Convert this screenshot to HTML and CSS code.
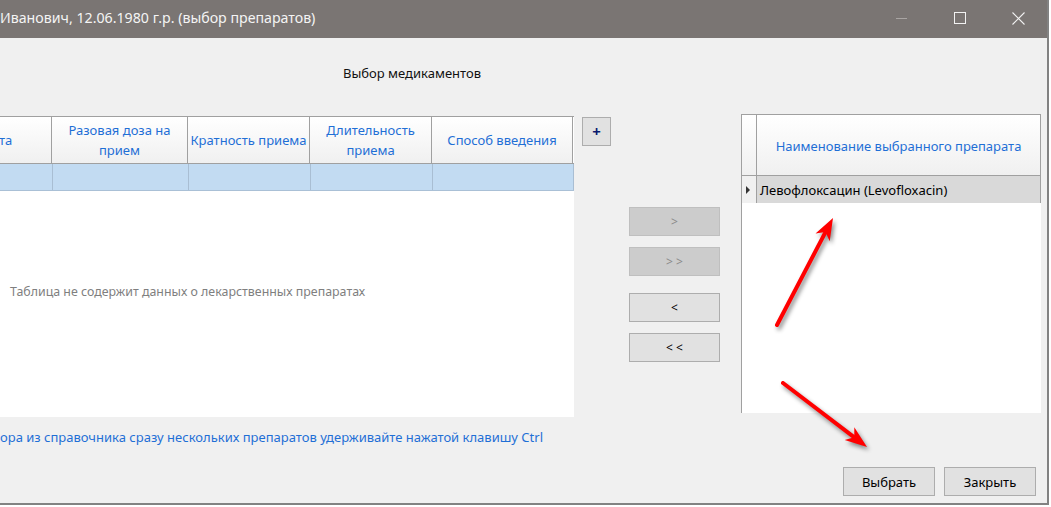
FILE: index.html
```html
<!DOCTYPE html>
<html lang="ru">
<head>
<meta charset="utf-8">
<link rel="stylesheet" href="styles.css">
</head>
<body>
<div class="window">
  <div class="titlebar">
    <span class="title">Иванович, 12.06.1980 г.р. (выбор препаратов)</span>
    <div class="controls">
      <span class="ctl"><svg width="12" height="12" viewBox="0 0 12 12"><line x1="0" y1="6.5" x2="11" y2="6.5" stroke="#a9a5a3" stroke-width="1"/></svg></span>
      <span class="ctl"><svg width="12" height="12" viewBox="0 0 12 12"><rect x="0.5" y="0.5" width="11" height="11" fill="none" stroke="#f2f2f2" stroke-width="1"/></svg></span>
      <span class="ctl"><svg width="13" height="13" viewBox="0 0 13 13"><path d="M0.5 0.5L12.5 12.5M12.5 0.5L0.5 12.5" stroke="#f2f2f2" stroke-width="1.1"/></svg></span>
    </div>
  </div>
  <div class="content">
    <div class="heading">Выбор медикаментов</div>
    <div class="main">
      <div class="left-table">
        <div class="thead">
          <div class="th c1 first">та</div>
          <div class="th c2">Разовая доза на прием</div>
          <div class="th c3">Кратность приема</div>
          <div class="th c4">Длительность приема</div>
          <div class="th c5">Способ введения</div>
        </div>
        <div class="trow">
          <div class="td c1"></div>
          <div class="td c2"></div>
          <div class="td c3"></div>
          <div class="td c4"></div>
          <div class="td c5"></div>
        </div>
        <div class="tempty">Таблица не содержит данных о лекарственных препаратах</div>
      </div>
      <div class="plus-col"><button class="btn plus">+</button></div>
      <div class="nav-col">
        <button class="btn nav disabled">&gt;</button>
        <button class="btn nav disabled">&gt; &gt;</button>
        <button class="btn nav gap">&lt;</button>
        <button class="btn nav">&lt; &lt;</button>
      </div>
      <div class="right-table">
        <div class="rhead">
          <div class="rh-corner"></div>
          <div class="rh-title">Наименование выбранного препарата</div>
        </div>
        <div class="rrow">
          <div class="rr-head"><span class="tri"></span></div>
          <div class="rr-cell">Левофлоксацин (Levofloxacin)</div>
        </div>
        <div class="rbody"></div>
      </div>
    </div>
    <div class="hint">ора из справочника сразу нескольких препаратов удерживайте нажатой клавишу Ctrl</div>
    <div class="footer">
      <button class="btn foot">Выбрать</button>
      <button class="btn foot">Закрыть</button>
    </div>
  </div>
  <svg class="arrows" width="1051" height="507" viewBox="0 0 1051 507">
    <g class="arrow">
      <line x1="777" y1="325" x2="825.5" y2="232.1" stroke="#ff0000" stroke-width="4" stroke-linecap="round"/>
      <polygon points="833,218 829.7,241.2 825.5,232.1 815.5,233.6" fill="#ff0000"/>
    </g>
    <g class="arrow">
      <line x1="783" y1="383" x2="854.3" y2="437.3" stroke="#ff0000" stroke-width="4" stroke-linecap="round"/>
      <polygon points="867,447 844.7,440.1 854.3,437.3 854.3,427.3" fill="#ff0000"/>
    </g>
  </svg>
</div>
</body>
</html>
```

FILE: styles.css
```css
html, body {
  margin: 0;
  padding: 0;
  background: #ffffff;
}

body {
  font-family: "Noto Sans", "Open Sans", "DejaVu Sans", sans-serif;
  font-size: 13px;
  color: #000000;
}

.window {
  position: relative;
  width: 1047px;
  height: 503px;
  background: #f0f0f0;
  border-right: 2px solid #828282;
  border-bottom: 2px solid #828282;
  overflow: hidden;
}

.titlebar {
  height: 38px;
  background: #7a7573;
  display: flex;
  align-items: center;
  justify-content: space-between;
}

.title {
  color: #f4f4f4;
  font-size: 14.2px;
  padding-left: 0;
  margin-top: -4px;
  white-space: nowrap;
}

.controls {
  display: flex;
  height: 38px;
  align-items: center;
  margin-top: -2px;
}

.ctl {
  width: 58px;
  height: 38px;
  display: flex;
  align-items: center;
  justify-content: center;
}

.ctl svg {
  display: block;
}

.content {
  display: flex;
  flex-direction: column;
}

.heading {
  margin-top: 26px;
  height: 18px;
  line-height: 18px;
  padding-left: 343px;
  white-space: nowrap;
  color: #111111;
}

.main {
  margin-top: 32px;
  display: flex;
  align-items: flex-start;
}

/* left table */
.left-table {
  margin-top: 2px;
  width: 574px;
  height: 301px;
  background: #ffffff;
  display: flex;
  flex-direction: column;
}

.thead {
  display: flex;
  height: 48px;
  box-sizing: border-box;
  border-top: 1px solid #a0a0a0;
  border-bottom: 1px solid #a0a0a0;
}

.th {
  box-sizing: border-box;
  border-right: 1px solid #a0a0a0;
  background: linear-gradient(#ffffff, #f0f0f0);
  color: #1f6fd6;
  display: flex;
  align-items: center;
  justify-content: center;
  text-align: center;
  line-height: 20px;
  padding: 0 8px;
}

.th.first {
  justify-content: flex-start;
  padding: 0;
  margin-left: -1px;
}

.c1 { width: 53px; }
.c2 { width: 136px; }
.c3 { width: 122px; padding: 0 1px; white-space: nowrap; }
.c4 { width: 122px; }
.c5 { width: 141px; }

.trow {
  display: flex;
  height: 27px;
  box-sizing: border-box;
  background: #c2dbf2;
  border-bottom: 1px solid #aac0d6;
}

.td {
  box-sizing: border-box;
  border-right: 1px solid #a9bed3;
}

.tempty {
  color: #7f7f7f;
  font-size: 12.4px;
  padding-left: 10px;
  margin-top: 92px;
  white-space: nowrap;
}

/* buttons */
.btn {
  font-family: inherit;
  font-size: 13px;
  box-sizing: border-box;
  background: #e1e1e1;
  border: 1px solid #adadad;
  color: #000000;
  padding: 0;
  margin: 0;
  display: flex;
  align-items: center;
  justify-content: center;
}

.plus-col {
  margin-left: 8px;
  margin-top: 3px;
}

.plus {
  width: 29px;
  height: 29px;
  font-weight: bold;
  font-size: 15px;
  color: #0a1a6e;
  line-height: 1;
}

.nav-col {
  margin-left: 18px;
  margin-top: 93px;
  display: flex;
  flex-direction: column;
  gap: 11px;
}

.nav {
  width: 91px;
  height: 29px;
  font-size: 12px;
}

.nav.disabled {
  background: #cccccc;
  border-color: #bfbfbf;
  color: #8a8a8a;
}

.nav.gap {
  margin-top: 6px;
}

/* right table */
.right-table {
  margin-left: 21px;
  width: 300px;
  height: 299px;
  box-sizing: border-box;
  border-left: 1px solid #a0a0a0;
  background: #ffffff;
  display: flex;
  flex-direction: column;
}

.rhead {
  display: flex;
  height: 62px;
  box-sizing: border-box;
  border-top: 1px solid #a0a0a0;
  border-bottom: 1px solid #a0a0a0;
  border-right: 1px solid #a0a0a0;
}

.rh-corner {
  width: 15px;
  box-sizing: border-box;
  border-right: 1px solid #a0a0a0;
  background: linear-gradient(#ffffff, #f0f0f0);
}

.rh-title {
  flex: 1;
  background: linear-gradient(#ffffff, #f0f0f0);
  color: #1f6fd6;
  display: flex;
  align-items: center;
  justify-content: center;
  white-space: nowrap;
  padding-top: 2px;
}

.rrow {
  display: flex;
  height: 27px;
  box-sizing: border-box;
  border-right: 1px solid #a0a0a0;
}

.rr-head {
  width: 15px;
  box-sizing: border-box;
  border-right: 1px solid #a0a0a0;
  background: #f0f0f0;
  display: flex;
  align-items: center;
  justify-content: center;
}

.tri {
  width: 0;
  height: 0;
  border-top: 4px solid transparent;
  border-bottom: 4px solid transparent;
  border-left: 4px solid #333333;
  margin-left: -2px;
}

.rr-cell {
  flex: 1;
  background: #d9d9d9;
  display: flex;
  align-items: center;
  padding-left: 3px;
  white-space: nowrap;
  color: #000000;
}

.rbody {
  flex: 1;
}

.hint {
  margin-top: 11px;
  margin-left: 0;
  color: #1f6fd6;
  white-space: nowrap;
  height: 18px;
  line-height: 18px;
}

.footer {
  display: flex;
  justify-content: flex-end;
  gap: 9px;
  padding-right: 11px;
  margin-top: 21px;
}

.foot {
  width: 92px;
  height: 29px;
}

.arrows {
  position: absolute;
  left: 0;
  top: 0;
  pointer-events: none;
}

.arrow {
  filter: drop-shadow(2px 3px 2px rgba(0, 0, 0, 0.45));
}
```
